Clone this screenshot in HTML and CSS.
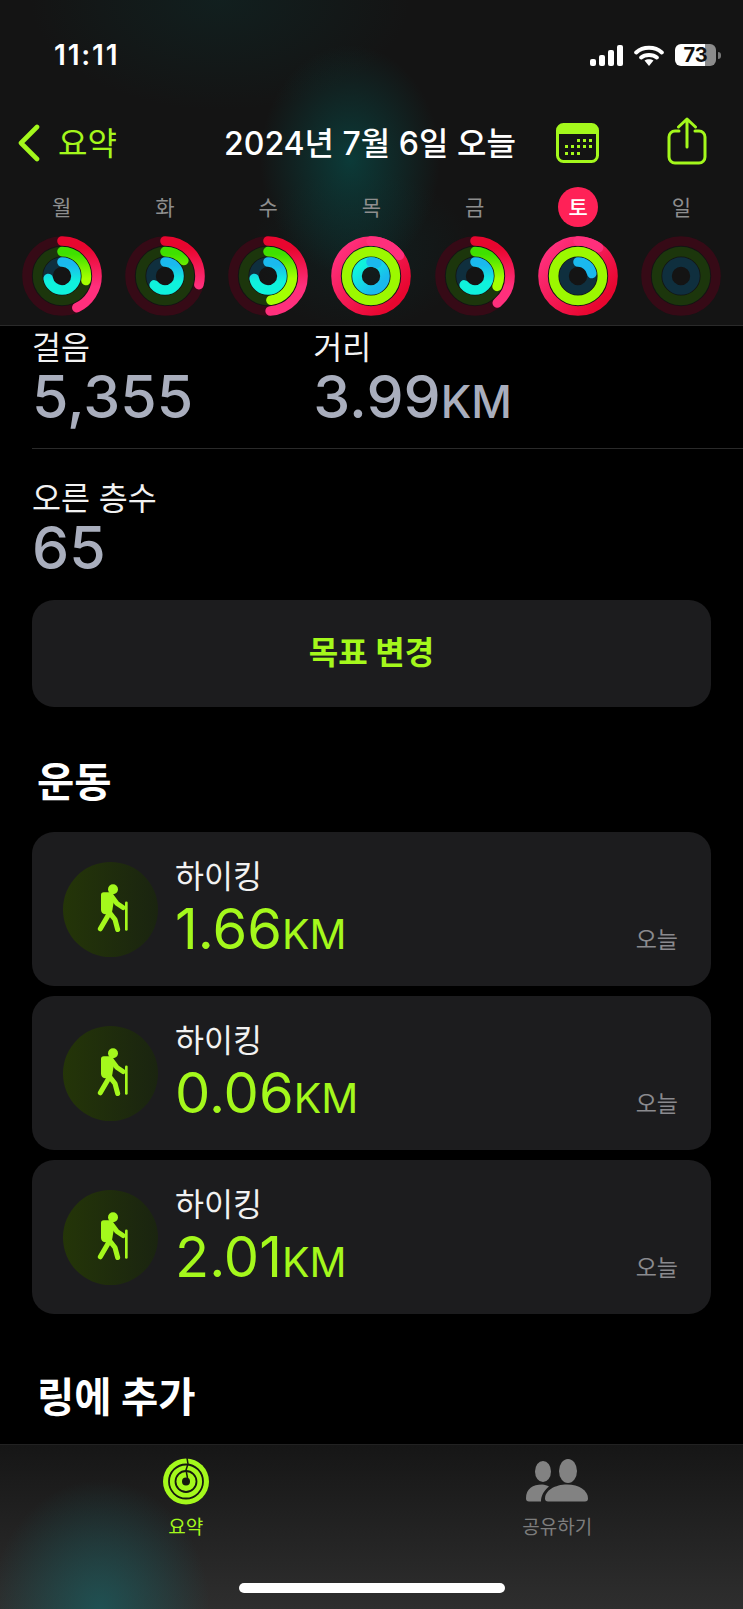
FILE: index.html
```html
<!DOCTYPE html>
<html lang="ko">
<head>
    <meta charset="UTF-8">
    <title>활동 요약</title>
    <link rel="stylesheet" href="styles.css">
</head>
<body>
    <svg class="defs" width="0" height="0">
        <defs>
            <linearGradient id="moveGrad" x1="1" y1="1" x2="0" y2="0">
                <stop offset="0.15" stop-color="#e8062f"/>
                <stop offset="0.9" stop-color="#ff2f7c"/>
            </linearGradient>
            <linearGradient id="moveArc" x1="1" y1="0" x2="0" y2="0">
                <stop offset="0.1" stop-color="#e8062f"/>
                <stop offset="0.65" stop-color="#ff2f7c"/>
            </linearGradient>
            <linearGradient id="exerciseArc" x1="1" y1="0" x2="0" y2="0">
                <stop offset="0.05" stop-color="#3fe000"/>
                <stop offset="0.55" stop-color="#a4ff00"/>
            </linearGradient>
            <linearGradient id="standGrad" x1="1" y1="1" x2="0" y2="0">
                <stop offset="0.2" stop-color="#1ab9ee"/>
                <stop offset="0.85" stop-color="#0ff2dc"/>
            </linearGradient>
            <linearGradient id="standArc" x1="1" y1="0" x2="0" y2="0">
                <stop offset="0.1" stop-color="#1ab9ee"/>
                <stop offset="0.7" stop-color="#0ff2dc"/>
            </linearGradient>
            <symbol id="hiker" viewBox="0 0 240 236">
                <circle cx="126" cy="57" r="15" fill="#a4f81c"/>
                <path d="M98 66 H118 L130 84 L122 132 H102 C94 132 90 126 90 118 V74 C90 69 93 66 98 66 Z" fill="#a4f81c"/>
                <path d="M120 76 L138 100 L156 112 M116 128 L88 176 M116 128 L132 148 L140 178" fill="none" stroke="#a4f81c" stroke-width="15" stroke-linecap="round" stroke-linejoin="round"/>
                <path d="M166 98 V178" stroke="#a4f81c" stroke-width="8" stroke-linecap="round"/>
            </symbol>
        </defs>
    </svg>

    <header class="top">
        <div class="status">
            <span class="clock">11:11</span>
            <div class="status-icons">
                <svg width="33" height="21" viewBox="0 0 33 21">
                    <rect x="0" y="14" width="6" height="7" rx="2" fill="#fff"/>
                    <rect x="9" y="10" width="6" height="11" rx="2" fill="#fff"/>
                    <rect x="18" y="5" width="6" height="16" rx="2" fill="#fff"/>
                    <rect x="27" y="0" width="6" height="21" rx="2" fill="#fff"/>
                </svg>
                <svg class="wifi" width="30" height="21" viewBox="0 0 30 21">
                    <path d="M2.2 7.5 C9 1.2 21 1.2 27.8 7.5 M7.2 12.5 C11 9.2 19 9.2 22.8 12.5" fill="none" stroke="#fff" stroke-width="4" stroke-linecap="round"/>
                    <path d="M10.5 15.5 C13 13.8 17 13.8 19.5 15.5 L15 21 Z" fill="#fff"/>
                </svg>
                <div class="battery"><span>73</span></div>
                <i class="battery-cap"></i>
            </div>
        </div>

        <nav class="bar">
            <a class="back">
                <svg width="24" height="38" viewBox="0 0 24 38">
                    <path d="M20 3 L4 19 L20 35" fill="none" stroke="#a4f81c" stroke-width="4.6" stroke-linecap="round" stroke-linejoin="round"/>
                </svg>
                <span>요약</span>
            </a>
            <div class="date">2024년 7월 6일 오늘</div>
            <svg class="cal" width="43" height="40" viewBox="0 0 43 40">
                <rect x="1.5" y="1.5" width="40" height="37" rx="6" fill="none" stroke="#a4f81c" stroke-width="3"/>
                <path d="M2 8 A6 6 0 0 1 8 2 H35 A6 6 0 0 1 41 8 V11 H2 Z" fill="#a4f81c"/>
                <g fill="#a4f81c">
                    <rect x="21" y="16" width="3" height="3"/><rect x="27" y="16" width="3" height="3"/><rect x="33" y="16" width="3" height="3"/>
                    <rect x="9" y="22" width="3" height="3"/><rect x="15" y="22" width="3" height="3"/><rect x="21" y="22" width="3" height="3"/><rect x="27" y="22" width="3" height="3"/><rect x="33" y="22" width="3" height="3"/>
                    <rect x="9" y="29" width="3" height="3"/><rect x="15" y="29" width="3" height="3"/><rect x="21" y="29" width="3" height="3"/>
                </g>
            </svg>
            <svg class="share" width="40" height="48" viewBox="0 0 40 48">
                <path d="M12 14 H8 A6 6 0 0 0 2 20 V40 A6 6 0 0 0 8 46 H32 A6 6 0 0 0 38 40 V20 A6 6 0 0 0 32 14 H28" fill="none" stroke="#a4f81c" stroke-width="3" stroke-linecap="round"/>
                <path d="M20 30 V2 M11.5 10 L20 2 L28.5 10" fill="none" stroke="#a4f81c" stroke-width="3" stroke-linecap="round" stroke-linejoin="round"/>
            </svg>
        </nav>

        <div class="days">
            <div class="day">
                <div class="day-name">월</div>
                <svg class="ring" viewBox="0 0 80 80">
                    <circle class="track-m" cx="40" cy="40" r="35"/><circle class="track-e" cx="40" cy="40" r="24.4"/><circle class="track-s" cx="40" cy="40" r="14"/>
                    <circle class="arc arc-m" cx="40" cy="40" r="35" pathLength="100" stroke-dasharray="43 100" transform="rotate(-90 40 40)"/>
                    <circle class="arc arc-e" cx="40" cy="40" r="24.4" pathLength="100" stroke-dasharray="28 100" transform="rotate(-90 40 40)"/>
                    <circle class="arc arc-s" cx="40" cy="40" r="14" pathLength="100" stroke-dasharray="72 100" transform="rotate(-90 40 40)"/>
                </svg>
            </div>
            <div class="day">
                <div class="day-name">화</div>
                <svg class="ring" viewBox="0 0 80 80">
                    <circle class="track-m" cx="40" cy="40" r="35"/><circle class="track-e" cx="40" cy="40" r="24.4"/><circle class="track-s" cx="40" cy="40" r="14"/>
                    <circle class="arc arc-m" cx="40" cy="40" r="35" pathLength="100" stroke-dasharray="29 100" transform="rotate(-90 40 40)"/>
                    <circle class="arc arc-e" cx="40" cy="40" r="24.4" pathLength="100" stroke-dasharray="14 100" transform="rotate(-90 40 40)"/>
                    <circle class="arc arc-s" cx="40" cy="40" r="14" pathLength="100" stroke-dasharray="64 100" transform="rotate(-90 40 40)"/>
                </svg>
            </div>
            <div class="day">
                <div class="day-name">수</div>
                <svg class="ring" viewBox="0 0 80 80">
                    <circle class="track-m" cx="40" cy="40" r="35"/><circle class="track-e" cx="40" cy="40" r="24.4"/><circle class="track-s" cx="40" cy="40" r="14"/>
                    <circle class="arc arc-m" cx="40" cy="40" r="35" pathLength="100" stroke-dasharray="49 100" transform="rotate(-90 40 40)"/>
                    <circle class="arc arc-e" cx="40" cy="40" r="24.4" pathLength="100" stroke-dasharray="48 100" transform="rotate(-90 40 40)"/>
                    <circle class="arc arc-s" cx="40" cy="40" r="14" pathLength="100" stroke-dasharray="72 100" transform="rotate(-90 40 40)"/>
                </svg>
            </div>
            <div class="day">
                <div class="day-name">목</div>
                <svg class="ring" viewBox="0 0 80 80">
                    <circle class="full-m" cx="40" cy="40" r="35"/>
                    <circle class="full-e" cx="40" cy="40" r="24.4"/>
                    <circle class="full-s" cx="40" cy="40" r="14"/>
                    <circle class="lap lap-m" cx="40" cy="40" r="35" pathLength="100" stroke-dasharray="15 100" transform="rotate(-90 40 40)"/>
                    <circle class="lap lap-s" cx="40" cy="40" r="14" pathLength="100" stroke-dasharray="7 100" transform="rotate(-90 40 40)"/>
                </svg>
            </div>
            <div class="day">
                <div class="day-name">금</div>
                <svg class="ring" viewBox="0 0 80 80">
                    <circle class="track-m" cx="40" cy="40" r="35"/><circle class="track-e" cx="40" cy="40" r="24.4"/><circle class="track-s" cx="40" cy="40" r="14"/>
                    <circle class="arc arc-m" cx="40" cy="40" r="35" pathLength="100" stroke-dasharray="39 100" transform="rotate(-90 40 40)"/>
                    <circle class="arc arc-e" cx="40" cy="40" r="24.4" pathLength="100" stroke-dasharray="32 100" transform="rotate(-90 40 40)"/>
                    <circle class="arc arc-s" cx="40" cy="40" r="14" pathLength="100" stroke-dasharray="64 100" transform="rotate(-90 40 40)"/>
                </svg>
            </div>
            <div class="day">
                <div class="day-name today">토</div>
                <svg class="ring" viewBox="0 0 80 80">
                    <circle class="full-m" cx="40" cy="40" r="35"/>
                    <circle class="full-e" cx="40" cy="40" r="24.4"/>
                    <circle class="track-s" cx="40" cy="40" r="14"/>
                    <circle class="lap lap-m" cx="40" cy="40" r="35" pathLength="100" stroke-dasharray="10 100" transform="rotate(-90 40 40)"/>
                    <circle class="lap lap-s" cx="40" cy="40" r="14" pathLength="100" stroke-dasharray="22 100" transform="rotate(-90 40 40)"/>
                </svg>
            </div>
            <div class="day">
                <div class="day-name">일</div>
                <svg class="ring" viewBox="0 0 80 80">
                    <circle class="track-m" cx="40" cy="40" r="35"/><circle class="track-e" cx="40" cy="40" r="24.4"/><circle class="track-s" cx="40" cy="40" r="14"/>
                </svg>
            </div>
        </div>
    </header>

    <main class="content">
        <div class="stat-row">
            <div class="stat">
                <div class="stat-label">걸음</div>
                <div class="stat-value">5,355</div>
            </div>
            <div class="stat stat-second">
                <div class="stat-label">거리</div>
                <div class="stat-value">3.99<span class="unit">KM</span></div>
            </div>
        </div>
        <div class="stat-row stat-row-line">
            <div class="stat">
                <div class="stat-label">오른 층수</div>
                <div class="stat-value">65</div>
            </div>
        </div>

        <button class="goal-btn">목표 변경</button>

        <h2 class="section-title">운동</h2>

        <div class="workouts">
            <div class="workout">
                <div class="workout-icon"><svg width="80" height="79"><use href="#hiker"/></svg></div>
                <div class="workout-text">
                    <div class="workout-name">하이킹</div>
                    <div class="workout-value">1.66<span class="unit">KM</span></div>
                </div>
                <div class="workout-date">오늘</div>
            </div>
            <div class="workout">
                <div class="workout-icon"><svg width="80" height="79"><use href="#hiker"/></svg></div>
                <div class="workout-text">
                    <div class="workout-name">하이킹</div>
                    <div class="workout-value">0.06<span class="unit">KM</span></div>
                </div>
                <div class="workout-date">오늘</div>
            </div>
            <div class="workout">
                <div class="workout-icon"><svg width="80" height="79"><use href="#hiker"/></svg></div>
                <div class="workout-text">
                    <div class="workout-name">하이킹</div>
                    <div class="workout-value">2.01<span class="unit">KM</span></div>
                </div>
                <div class="workout-date">오늘</div>
            </div>
        </div>

        <h2 class="section-title section-last">링에 추가</h2>
    </main>

    <footer class="tabs">
        <div class="tab-row">
            <div class="tab tab-active">
                <svg width="46" height="47" viewBox="0 0 46 47">
                    <circle cx="23" cy="23.5" r="23" fill="#a4f81c"/>
                    <circle cx="23" cy="23.5" r="17" fill="none" stroke="#15180f" stroke-width="1.8"/>
                    <circle cx="23" cy="23.5" r="10.5" fill="none" stroke="#15180f" stroke-width="1.8"/>
                    <circle cx="23" cy="23.5" r="4" fill="#15180f"/>
                    <path d="M24 0 L25 6 L23 12 L24.5 20" fill="none" stroke="#15180f" stroke-width="1.5"/>
                </svg>
                <span>요약</span>
            </div>
            <div class="tab">
                <svg width="62" height="42" viewBox="0 0 62 42">
                    <ellipse cx="17" cy="11" rx="8" ry="10.5" fill="#828282"/>
                    <ellipse cx="42" cy="10.5" rx="9" ry="12" fill="#828282"/>
                    <path d="M0 38 C0 28 7 24 16 24 C19 24 21 25 23 26 C18 30 15 35 15 41 H3 C1 41 0 40 0 38 Z" fill="#828282"/>
                    <path d="M19 38 C19 30 29 24 41 24 C53 24 62 30 62 38 C62 40 61 41 59 41 H22 C20 41 19 40 19 38 Z" fill="#828282"/>
                </svg>
                <span>공유하기</span>
            </div>
        </div>
        <div class="home-bar"></div>
    </footer>
</body>
</html>
```

FILE: styles.css
```css
* {
    box-sizing: border-box;
}
html, body {
    margin: 0;
    padding: 0;
}
body {
    width: 743px;
    height: 1609px;
    display: flex;
    flex-direction: column;
    overflow: hidden;
    background-color: #000;
    color: #fff;
    font-family: Inter, "Noto Sans CJK KR", sans-serif;
}
.defs {
    position: absolute;
}

/* top area */
.top {
    height: 326px;
    flex: none;
    border-bottom: 1px solid #2a2a2a;
    background-color: #141414;
    background-image:
        radial-gradient(ellipse 90px 115px at 350px 160px, rgba(8, 75, 72, 0.7), rgba(8, 60, 60, 0) 100%),
        radial-gradient(ellipse 190px 110px at 220px 0, rgba(10, 60, 58, 0.28), rgba(10, 60, 58, 0) 100%),
        radial-gradient(ellipse 110px 80px at 360px 250px, rgba(8, 60, 60, 0.25), rgba(8, 60, 60, 0) 100%);
}
.status {
    height: 110px;
    display: flex;
    align-items: center;
    justify-content: space-between;
    padding: 0 22px 0 54px;
}
.clock {
    font-size: 28px;
    font-weight: 600;
    letter-spacing: 1.8px;
}
.status-icons {
    display: flex;
    align-items: center;
}
.wifi {
    margin-left: 11px;
}
.battery {
    width: 41px;
    height: 22px;
    margin-left: 11px;
    border-radius: 6px;
    background: linear-gradient(to right, #fff 73%, #8c8c8c 73%);
    color: #111;
    font-size: 20px;
    font-weight: 700;
    line-height: 22px;
    text-align: center;
}
.battery-cap {
    width: 3px;
    height: 7px;
    margin-left: 2px;
    border-radius: 0 3px 3px 0;
    background-color: #777;
}
.bar {
    height: 66px;
    display: flex;
    align-items: center;
    padding-left: 17px;
}
.back {
    display: flex;
    align-items: center;
    width: 207px;
    color: #a4f81c;
    font-size: 32px;
}
.back span {
    margin-left: 17px;
    margin-top: -5px;
}
.date {
    width: 292px;
    margin-top: -4px;
    font-size: 32px;
    font-weight: 500;
    white-space: nowrap;
}
.cal {
    margin-left: 40px;
}
.share {
    margin-left: 68px;
    margin-top: -4px;
}
.days {
    display: grid;
    grid-template-columns: repeat(7, 1fr);
    padding: 0 10px;
}
.day {
    display: flex;
    flex-direction: column;
    align-items: center;
    padding-top: 11px;
}
.day-name {
    width: 40px;
    height: 40px;
    border-radius: 50%;
    color: #8e8e8e;
    font-size: 21px;
    line-height: 41px;
    text-align: center;
}
.today {
    background-color: #ff2157;
    color: #fff;
    font-weight: 500;
}
.ring {
    width: 80px;
    height: 80px;
    margin-top: 9px;
}
.ring circle {
    fill: none;
    stroke-width: 9.6;
}
.track-m {
    stroke: #360a16;
}
.track-e {
    stroke: #1c360c;
}
.track-s {
    stroke: #0f2f3e;
}
.arc, .lap {
    stroke-linecap: round;
}
.arc-m {
    stroke: url(#moveArc);
}
.full-m {
    stroke: url(#moveGrad);
}
.arc-e {
    stroke: url(#exerciseArc);
}
.full-e {
    stroke: #9cf800;
}
.arc-s {
    stroke: url(#standArc);
}
.full-s {
    stroke: url(#standGrad);
}
.lap-m {
    stroke: #ff2f7c;
}
.lap-s {
    stroke: #1ab9ee;
}

/* scroll content */
.content {
    flex: 1;
    min-height: 0;
    overflow: hidden;
    padding-top: 2px;
}
.stat-row {
    display: flex;
    margin-left: 32px;
    height: 121px;
    border-bottom: 1px solid #2a2a2a;
}
.stat-row-line {
    height: auto;
    padding-top: 30px;
    border-bottom: none;
}
.stat-second {
    margin-left: 120px;
}
.stat-label {
    font-size: 31.5px;
    line-height: 40px;
    color: #f2f2f2;
}
.stat-value {
    margin-top: -1px;
    font-size: 59px;
    line-height: 60px;
    font-weight: 500;
    color: #a9aebd;
}
.unit {
    font-size: 44.5px;
}
.goal-btn {
    display: block;
    width: 679px;
    height: 107px;
    margin: 22px 0 0 32px;
    padding: 0 0 8px;
    border: none;
    border-radius: 22px;
    background-color: #1c1c1e;
    color: #a4f81c;
    font-family: inherit;
    font-size: 32px;
    font-weight: 700;
}
.section-title {
    margin: 51px 0 24px 37px;
    font-size: 40.5px;
    line-height: 50px;
    font-weight: 700;
}
.section-last {
    margin-top: 59px;
}
.workouts {
    display: flex;
    flex-direction: column;
    gap: 10px;
    margin-left: 32px;
    width: 679px;
}
.workout {
    height: 154px;
    display: flex;
    padding: 25px 33px 31px 31px;
    border-radius: 22px;
    background-color: #1c1c1e;
}
.workout-icon {
    width: 95px;
    height: 95px;
    margin-top: 5px;
    border-radius: 50%;
    background-image: linear-gradient(to right, #243508, #1a2410);
    display: flex;
    align-items: center;
    justify-content: center;
}
.workout-text {
    margin-left: 17px;
}
.workout-name {
    font-size: 31.5px;
    line-height: 40px;
    color: #f2f2f2;
}
.workout-value {
    margin-top: 2px;
    font-size: 56px;
    line-height: 60px;
    color: #a4f81c;
}
.workout-value .unit {
    font-size: 41px;
}
.workout-date {
    margin-left: auto;
    align-self: flex-end;
    font-size: 23px;
    line-height: 30px;
    color: #8a8a8e;
}

/* tab bar */
.tabs {
    height: 165px;
    flex: none;
    border-top: 1px solid #222;
    background-image:
        radial-gradient(ellipse 110px 130px at 100px 165px, rgba(28, 90, 92, 0.8), rgba(28, 90, 92, 0) 100%),
        linear-gradient(to bottom, #161616, #2e2e2e);
}
.tab-row {
    display: grid;
    grid-template-columns: 1fr 1fr;
    height: 138px;
    padding-top: 13px;
}
.tab {
    display: flex;
    flex-direction: column;
    align-items: center;
    color: #7d7d7d;
    font-size: 19px;
}
.tab svg {
    height: 47px;
}
.tab span {
    margin-top: 7px;
}
.tab-active {
    color: #a4f81c;
}
.home-bar {
    width: 266px;
    height: 10px;
    margin-left: 239px;
    border-radius: 5px;
    background-color: #fff;
}
```
